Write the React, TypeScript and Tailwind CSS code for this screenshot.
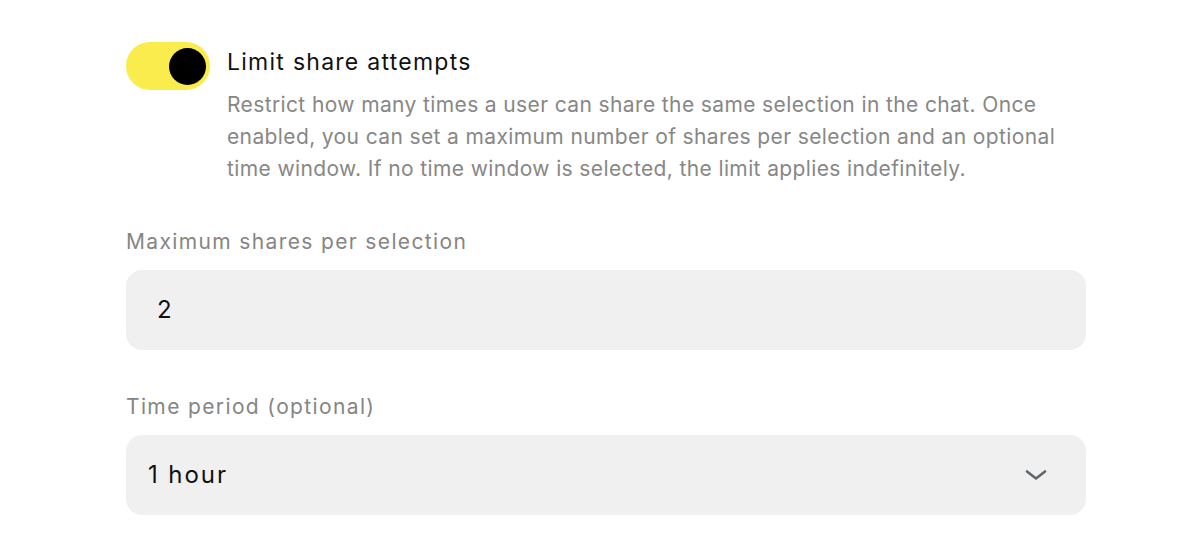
import * as React from "react"

export default function App() {
  const [enabled, setEnabled] = React.useState(true)

  return (
    <div className="min-h-[548px] w-full bg-white font-['Inter',sans-serif]">
      <div className="ml-[126px] w-[960px] pt-[42px]">
        {/* Toggle row */}
        <div className="flex gap-[17px]">
          <button
            onClick={() => setEnabled(!enabled)}
            className="relative h-[48px] w-[84px] shrink-0 rounded-full bg-[#fbec4d]"
          >
            <span className="absolute right-[4px] top-[6px] h-[37px] w-[37px] rounded-full bg-black" />
          </button>
          <div className="pt-[2px]">
            <h2 className="text-[23px] leading-[36px] tracking-[0.055em] text-[#111111]">Limit share attempts</h2>
            <p className="mt-[9px] text-[21px] leading-[32px] tracking-[0.018em] text-[#878787]">
              Restrict how many times a user can share the same selection in the chat. Once enabled, you can set a
              maximum number of shares per selection and an optional time window. If no time window is selected, the
              limit applies indefinitely.
            </p>
          </div>
        </div>

        {/* Maximum shares */}
        <label className="mt-[41px] block text-[21px] leading-[32px] tracking-[0.065em] text-[#858585]">
          Maximum shares per selection
        </label>
        <div className="mt-[12px] flex h-[80px] items-center rounded-[16px] bg-[#eff0ef] pl-[31px]">
          <span className="text-[24px] tracking-[0.06em] text-[#111111]">2</span>
        </div>

        {/* Time period */}
        <label className="mt-[41px] block text-[21px] leading-[32px] tracking-[0.065em] text-[#858585]">
          Time period (optional)
        </label>
        <div className="mt-[12px] flex h-[80px] items-center justify-between rounded-[16px] bg-[#eff0ef] pl-[22px] pr-[38px]">
          <span className="text-[24px] tracking-[0.08em] text-[#111111]">1 hour</span>
          <svg width="24" height="12" viewBox="0 0 24 12" fill="none" stroke="#63676b" strokeWidth="2.6" strokeLinecap="round" strokeLinejoin="round">
            <path d="M3 2.5L12 9.5L21 2.5" />
          </svg>
        </div>
      </div>
    </div>
  )
}
